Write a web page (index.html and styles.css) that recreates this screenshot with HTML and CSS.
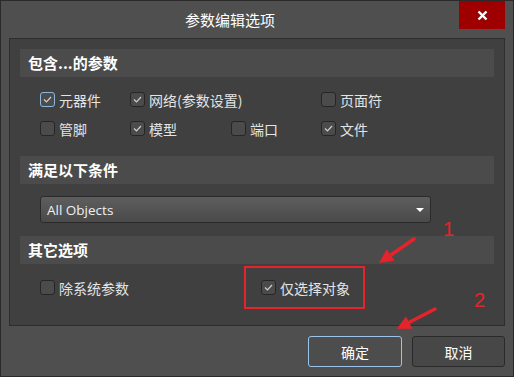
FILE: index.html
```html
<!DOCTYPE html>
<html>
<head>
<meta charset="utf-8">
<link rel="stylesheet" href="styles.css">
</head>
<body>
<div class="window">
  <div class="titlebar">
    <div class="title">参数编辑选项</div>
    <div class="close"><svg width="11" height="11" viewBox="0 0 11 11"><path d="M1.5 1.5 L9.5 9.5 M9.5 1.5 L1.5 9.5" stroke="#fff" stroke-width="2.4" fill="none"/></svg></div>
  </div>
  <div class="panel">
    <div class="section-head">包含...的参数</div>
    <div class="grid">
      <label class="cb-item"><span class="cb focus"><svg width="13" height="13" viewBox="0 0 13 13"><path d="M3 6.5 L5.5 9 L10 4" stroke="#cfcfcf" stroke-width="1.2" fill="none"/></svg></span>元器件</label>
      <label class="cb-item"><span class="cb"><svg width="13" height="13" viewBox="0 0 13 13"><path d="M3 6.5 L5.5 9 L10 4" stroke="#cfcfcf" stroke-width="1.2" fill="none"/></svg></span>网络(参数设置)</label>
      <span></span>
      <label class="cb-item"><span class="cb"></span>页面符</label>
      <label class="cb-item"><span class="cb"></span>管脚</label>
      <label class="cb-item"><span class="cb"><svg width="13" height="13" viewBox="0 0 13 13"><path d="M3 6.5 L5.5 9 L10 4" stroke="#cfcfcf" stroke-width="1.2" fill="none"/></svg></span>模型</label>
      <label class="cb-item"><span class="cb"></span>端口</label>
      <label class="cb-item"><span class="cb"><svg width="13" height="13" viewBox="0 0 13 13"><path d="M3 6.5 L5.5 9 L10 4" stroke="#cfcfcf" stroke-width="1.2" fill="none"/></svg></span>文件</label>
    </div>
    <div class="section-head">满足以下条件</div>
    <div class="select-wrap">
      <div class="select"><span class="select-text">All Objects</span><span class="arrow"></span></div>
    </div>
    <div class="section-head">其它选项</div>
    <div class="other-row">
      <label class="cb-item first"><span class="cb"></span>除系统参数</label>
      <label class="cb-item hl"><span class="cb"><svg width="13" height="13" viewBox="0 0 13 13"><path d="M3 6.5 L5.5 9 L10 4" stroke="#cfcfcf" stroke-width="1.2" fill="none"/></svg></span>仅选择对象</label>
    </div>
  </div>
  <div class="buttons">
    <div class="btn primary">确定</div>
    <div class="btn">取消</div>
  </div>
  <svg class="annot" width="514" height="377" viewBox="0 0 514 377">
    <line x1="414" y1="239" x2="388" y2="257" stroke="#e4242a" stroke-width="3.5" stroke-linecap="round"/>
    <polygon points="379,263 394.5,260.8 386.7,249.2" fill="#e4242a"/>
    <line x1="435" y1="309" x2="406" y2="324" stroke="#e4242a" stroke-width="3.5" stroke-linecap="round"/>
    <polygon points="396.7,329 412.4,328.8 406,316.4" fill="#e4242a"/>
    <text x="443" y="236" class="num">1</text>
    <text x="474" y="307" class="num">2</text>
  </svg>
</div>
</body>
</html>
```

FILE: styles.css
```css
body {
  margin: 0;
  background: #4f4f4f;
  font-family: "Noto Sans CJK SC", "Noto Sans", sans-serif;
}
.window {
  position: relative;
  width: 514px;
  height: 377px;
  box-sizing: border-box;
  border: 1px solid #2a2a2a;
  background: #4f4f4f;
  color: #e6e6e6;
}
.titlebar {
  display: flex;
  height: 37px;
}
.title {
  flex: 1;
  text-align: center;
  font-size: 15px;
  color: #ffffff;
  line-height: 37px;
}
.close {
  width: 46px;
  height: 28px;
  margin-right: 8px;
  background: #9e0000;
  display: flex;
  align-items: center;
  justify-content: center;
}
.close svg { display: block; }
.panel {
  margin: 0 8px;
  height: 288px;
  box-sizing: border-box;
  padding: 10px;
  border: 1px solid #2e2e2e;
  background: #404040;
}
.section-head {
  height: 28px;
  line-height: 28px;
  padding-left: 8px;
  background: #4b4b4b;
  color: #ffffff;
  font-weight: bold;
  font-size: 15px;
}
.grid {
  display: grid;
  grid-template-columns: 90px 101px 90px auto;
  grid-auto-rows: 29px;
  align-items: center;
  padding: 8px 0 13px 20px;
}
.cb-item {
  display: flex;
  align-items: center;
  gap: 4px;
  font-size: 14px;
  color: #e4e4e4;
  white-space: nowrap;
}
.cb {
  width: 15px;
  height: 15px;
  box-sizing: border-box;
  border: 1px solid #262626;
  border-radius: 3px;
  background: #4b4b4b;
  display: flex;
  align-items: center;
  justify-content: center;
  flex: none;
}
.cb svg { display: block; }
.cb.focus { border-color: #8fb6dd; }
.select-wrap {
  padding: 12px 0 13px 20px;
}
.select {
  width: 391px;
  height: 27px;
  box-sizing: border-box;
  border: 1px solid #2a2a2a;
  border-radius: 3px;
  background: linear-gradient(#5e5e5e, #4a4a4a);
  display: flex;
  align-items: center;
  justify-content: space-between;
  padding: 0 6px 0 6px;
}
.select-text {
  font-family: "Open Sans", "Noto Sans", sans-serif;
  font-size: 13.5px;
  color: #f0f0f0;
}
.arrow {
  width: 0;
  height: 0;
  border-left: 4px solid transparent;
  border-right: 4px solid transparent;
  border-top: 4px solid #ffffff;
}
.other-row {
  display: flex;
  align-items: center;
  padding-left: 20px;
  margin-top: 2px;
}
.other-row .first {
  width: 204px;
}
.hl {
  width: 121px;
  height: 43px;
  box-sizing: border-box;
  border: 2px solid #e4242a;
  padding-left: 15px;
}
.buttons {
  display: flex;
  justify-content: flex-end;
  gap: 10px;
  padding: 10px 8px 0 0;
}
.btn {
  width: 93px;
  height: 31px;
  box-sizing: border-box;
  border: 1px solid #2a2a2a;
  border-radius: 3px;
  background: #474747;
  color: #ffffff;
  font-size: 14px;
  display: flex;
  align-items: center;
  justify-content: center;
}
.btn.primary {
  width: 94px;
  border-color: #9cc4ea;
  background: #4d4d4d;
}
.annot {
  position: absolute;
  left: -1px;
  top: -1px;
  pointer-events: none;
}
.num {
  font-family: "Liberation Sans", sans-serif;
  font-size: 20px;
  fill: #e4242a;
}
```
